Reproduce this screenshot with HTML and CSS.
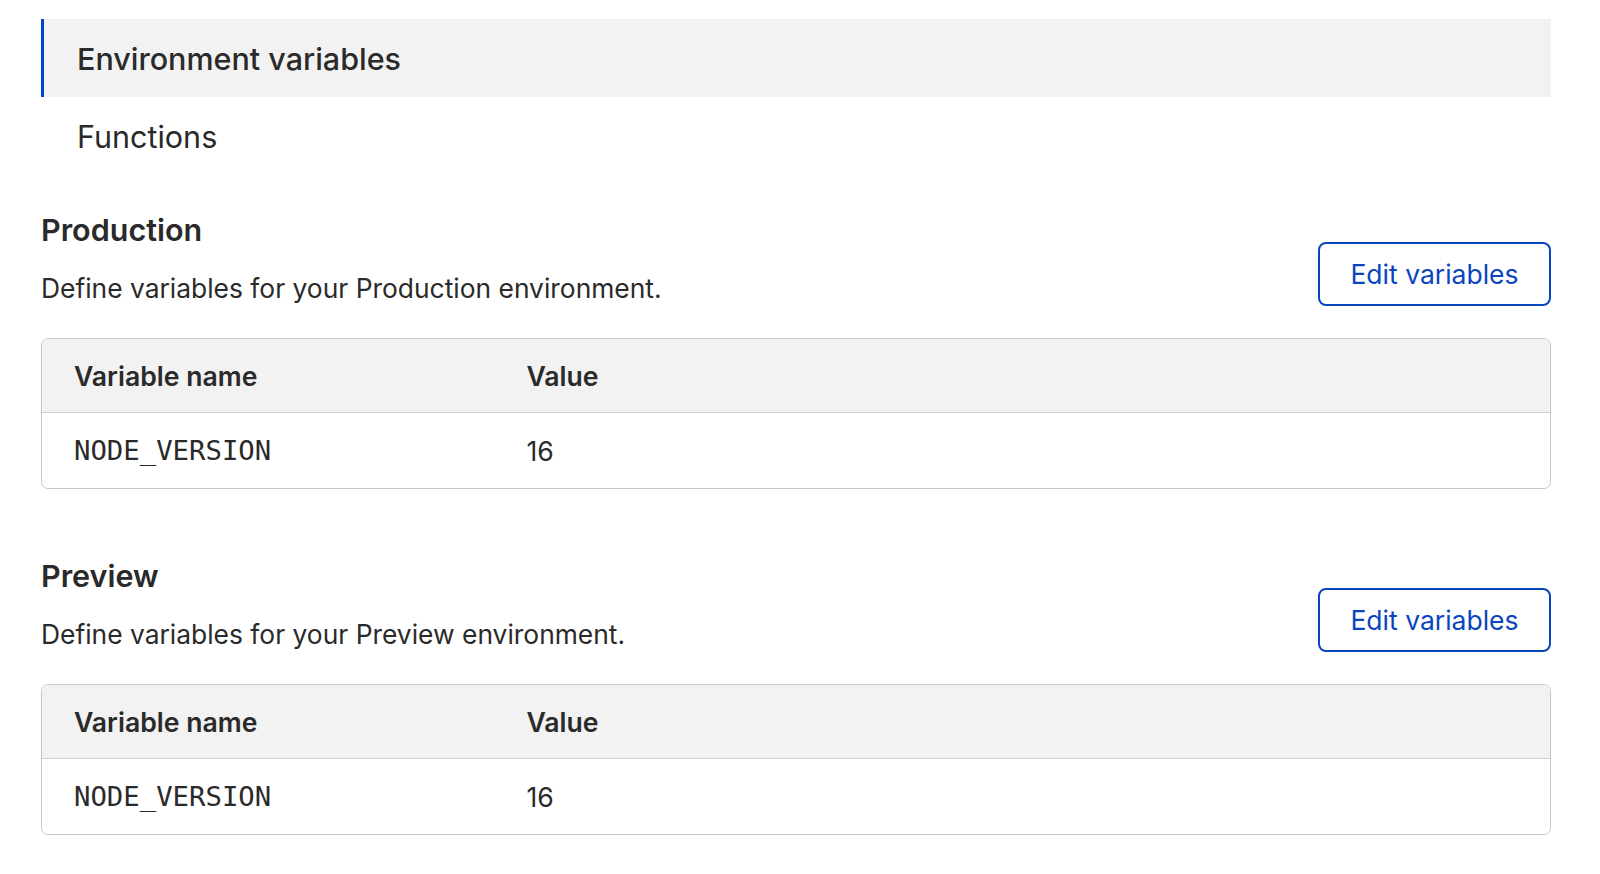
FILE: index.html
```html
<!DOCTYPE html>
<html>
<head>
<meta charset="utf-8">
<link rel="stylesheet" href="styles.css">
</head>
<body>
<nav class="subnav">
  <div class="subnav-item active">Environment variables</div>
  <div class="subnav-item">Functions</div>
</nav>

<section class="env">
  <div class="env-head">
    <div class="env-text">
      <h2 class="env-title">Production</h2>
      <p class="env-desc">Define variables for your Production environment.</p>
    </div>
    <button class="btn-outline">Edit variables</button>
  </div>
  <div class="vars">
    <div class="vars-row vars-header">
      <div class="cell">Variable name</div>
      <div class="cell">Value</div>
    </div>
    <div class="vars-row">
      <div class="cell mono">NODE_VERSION</div>
      <div class="cell">16</div>
    </div>
  </div>
</section>

<section class="env">
  <div class="env-head">
    <div class="env-text">
      <h2 class="env-title">Preview</h2>
      <p class="env-desc">Define variables for your Preview environment.</p>
    </div>
    <button class="btn-outline">Edit variables</button>
  </div>
  <div class="vars">
    <div class="vars-row vars-header">
      <div class="cell">Variable name</div>
      <div class="cell">Value</div>
    </div>
    <div class="vars-row">
      <div class="cell mono">NODE_VERSION</div>
      <div class="cell">16</div>
    </div>
  </div>
</section>
</body>
</html>
```

FILE: styles.css
```css
* { box-sizing: border-box; }

body {
  margin: 0;
  padding: 19px 49px 0 41px;
  background: #ffffff;
  color: #2a2a2a;
  font-family: Inter, "Liberation Sans", sans-serif;
}

.subnav {
  display: flex;
  flex-direction: column;
}

.subnav-item {
  height: 78px;
  display: flex;
  align-items: center;
  padding: 1px 0 0 33px;
  font-size: 30.5px;
  color: #2a2a2a;
  border-left: 3px solid transparent;
}

.subnav-item.active {
  background: #f2f2f2;
  border-left-color: #0045d0;
  font-weight: 500;
}

.env {
  margin-top: 37px;
}

.env + .env {
  margin-top: 69px;
}

.env-head {
  display: flex;
  justify-content: space-between;
  align-items: flex-end;
}

.env-text {
  display: flex;
  flex-direction: column;
  gap: 22px;
}

.env-title {
  margin: 0;
  font-size: 30.5px;
  line-height: 36px;
  font-weight: 600;
  color: #2a2a2a;
}

.env-desc {
  margin: 0;
  font-size: 26.4px;
  line-height: 36px;
  color: #2a2a2a;
}

.btn-outline {
  width: 233px;
  height: 64px;
  border: 2px solid #0a45c0;
  border-radius: 8px;
  background: #ffffff;
  color: #0a45c0;
  font-family: Inter, "Liberation Sans", sans-serif;
  font-size: 26.5px;
  padding: 0;
}

.vars {
  margin-top: 32px;
  border: 1.5px solid #c8c8c8;
  border-radius: 7px;
  overflow: hidden;
}

.vars-row {
  display: grid;
  grid-template-columns: 30% 1fr;
  height: 75px;
  align-items: center;
}

.vars-header {
  background: #f2f2f2;
  border-bottom: 1.5px solid #d0d0d0;
  height: 74px;
  font-weight: 600;
}

.cell {
  padding-left: 32px;
  font-size: 26.6px;
}

.mono {
  font-family: "DejaVu Sans Mono", "Liberation Mono", monospace;
  font-size: 27.3px;
}
```
